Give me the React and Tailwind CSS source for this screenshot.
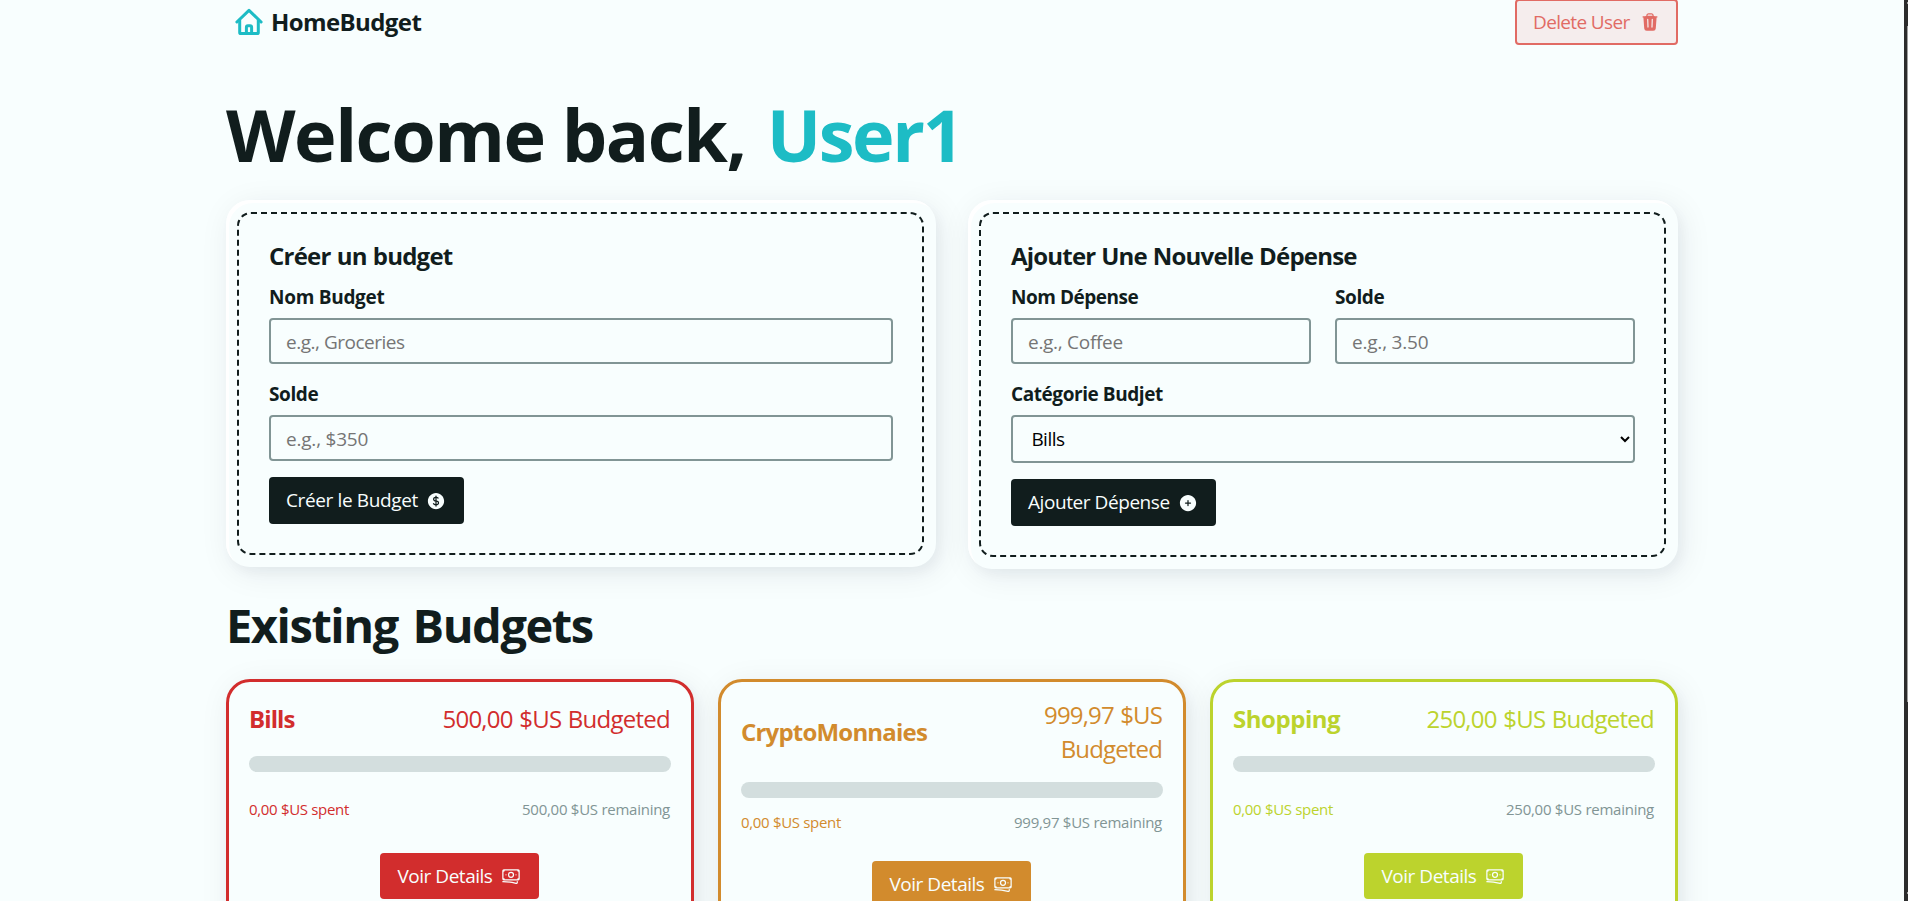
import React from "react";
import { HiTrash, HiCurrencyDollar, HiPlusCircle, HiOutlineBanknotes } from "react-icons/hi2";

const cardShadow =
  "shadow-[4px_6px_12px_rgba(17,24,50,0.035),4px_6px_32px_rgba(17,24,50,0.08)]";
const formCard =
  "w-[710px] rounded-[24px] bg-[#f8fefe] pt-3 pr-3 pb-3 pl-[11px] shadow-[inset_3px_3px_0_#ffffff,4px_6px_12px_rgba(17,24,50,0.035),4px_6px_32px_rgba(17,24,50,0.08)]";
const formBody =
  "rounded-[14px] border-2 border-dashed border-[#111d1d] pt-[29px] pr-[29px] pb-[29px] pl-[30px]";
const heading = "text-[24px] leading-[26px] font-bold";
const label = "block pt-px text-[19px] leading-[26px] font-bold";
const field =
  "mt-2 block h-[46px] w-full rounded-[4px] border-2 border-[#819595] bg-transparent px-[15px] pt-px text-[19px] placeholder:text-[#757575]";
const darkButton =
  "mt-4 flex h-[47px] items-center justify-between rounded-[4px] bg-[#111d1d] pr-[18px] pl-[17px] text-[19px] whitespace-nowrap text-[#f8fefe]";

function Logo() {
  return (
    <svg width="28" height="28" viewBox="0 0 28 28" fill="none" stroke="#1dbcc5" strokeWidth="3" strokeLinecap="round" strokeLinejoin="round">
      <path d="M1.9 14 14 2.4 26.1 14" />
      <path d="M4.7 12v12.4q0 1.2 1.2 1.2h16.2q1.2 0 1.2-1.2V12" />
      <path d="M11.4 25.4v-6q0-1.7 1.5-1.7h2.2q1.5 0 1.5 1.7v6" />
    </svg>
  );
}

const budgets = [
  {
    name: "Bills", nameTracking: "tracking-[-0.9px]",
    amount: "500,00 $US Budgeted", amountClass: "tracking-[-0.75px] [word-spacing:1px]",
    spent: "0,00 $US spent", remaining: "500,00 $US remaining",
    text: "text-[#d22d2d]", border: "border-[#d22d2d]", bg: "bg-[#d22d2d]",
    pad: "pt-5", bar: "mt-5", caption: "mt-[26px]", button: "mt-[33px]",
  },
  {
    name: "CryptoMonnaies", nameTracking: "tracking-[-0.8px]",
    amount: "999,97 $US Budgeted", amountClass: "w-[140px] tracking-[-0.85px] [word-spacing:1px]",
    spent: "0,00 $US spent", remaining: "999,97 $US remaining",
    text: "text-[#d28b2d]", border: "border-[#d28b2d]", bg: "bg-[#d28b2d]",
    pad: "pt-4", bar: "mt-4", caption: "mt-[13px]", button: "mt-[28px]",
  },
  {
    name: "Shopping", nameTracking: "tracking-[-0.47px]",
    amount: "250,00 $US Budgeted", amountClass: "tracking-[-0.75px] [word-spacing:1px]",
    spent: "0,00 $US spent", remaining: "250,00 $US remaining",
    text: "text-[#bcd32d]", border: "border-[#bcd32d]", bg: "bg-[#bcd32d]",
    pad: "pt-5", bar: "mt-5", caption: "mt-[26px]", button: "mt-[33px]",
  },
];

function BudgetCard({ b }) {
  return (
    <article className={`w-[468px] rounded-[24px] border-[3px] bg-[#f8fefe] px-5 pb-5 ${b.pad} ${b.border} ${b.text} ${cardShadow}`}>
      <div className="flex items-center justify-between pr-px text-[24px] leading-[34px]">
        <h3 className={`font-bold ${b.nameTracking}`}>{b.name}</h3>
        <p className={`text-right ${b.amountClass}`}>{b.amount}</p>
      </div>
      <div className={`h-4 rounded-full bg-[#d3dede] ${b.bar}`} />
      <div className={`flex justify-between pr-px text-[15px] leading-[22px] ${b.caption}`}>
        <span className="tracking-[-0.32px]">{b.spent}</span>
        <span className="tracking-[-0.26px] text-[#819595]">{b.remaining}</span>
      </div>
      <button className={`ml-[131px] flex h-[46px] w-[159px] items-center justify-between rounded-[4px] pr-[18px] pl-[17.5px] text-[19px] tracking-[-0.48px] whitespace-nowrap text-[#f8fefe] ${b.button} ${b.bg}`}>
        <span>Voir Details</span>
        <HiOutlineBanknotes className="size-5" />
      </button>
    </article>
  );
}

export default function App() {
  return (
    <div className="flex h-[901px] overflow-hidden bg-[#f8fefe] font-['Open_Sans','Noto_Sans',sans-serif] text-[#111d1d]">
      <main className="flex-1 pr-[226px] pl-[226px]">
        <nav className="flex h-[45px] items-end justify-between">
          <a className="flex h-[46px] items-center gap-2 pl-[9px] text-[24px] font-bold tracking-[-0.6px]">
            <Logo />
            <span>HomeBudget</span>
          </a>
          <button className="flex h-[46px] w-[163px] items-center justify-between rounded-[4px] border-2 border-[#e16b64] bg-[#f5eded] pr-4 pl-[16px] text-[19px] tracking-[-0.64px] whitespace-nowrap text-[#e16b64]">
            <span>Delete User</span>
            <HiTrash className="size-5" />
          </button>
        </nav>

        <h1 className="mt-[49px] text-[72px] leading-[80px] font-bold tracking-[-1.5px]">
          Welcome back, <span className="ml-[4px] tracking-[-2.36px] text-[#1dbcc5]">User1</span>
        </h1>

        <div className="mt-[26px] flex items-start gap-8">
          <section className={formCard}>
            <div className={formBody}>
              <h2 className={`${heading} tracking-[-0.75px] [word-spacing:0.5px]`}>Créer un budget</h2>
              <label className={`${label} mt-[14px] tracking-[-0.28px]`}>Nom Budget</label>
              <input className={`${field} tracking-[-0.49px]`} placeholder="e.g., Groceries" />
              <label className={`${label} mt-4 tracking-[-0.39px]`}>Solde</label>
              <input className={`${field} tracking-[-0.21px]`} placeholder="e.g., $350" />
              <button className={`${darkButton} w-[195px] tracking-[-0.37px]`}>
                <span>Créer le Budget</span>
                <HiCurrencyDollar className="size-5" />
              </button>
            </div>
          </section>

          <section className={formCard}>
            <div className={formBody}>
              <h2 className={`${heading} tracking-[-0.81px] [word-spacing:0.5px]`}>Ajouter Une Nouvelle Dépense</h2>
              <div className="mt-[14px] grid grid-cols-2 gap-6">
                <div>
                  <label className={`${label} tracking-[-0.48px]`}>Nom Dépense</label>
                  <input className={`${field} tracking-[-0.29px]`} placeholder="e.g., Coffee" />
                </div>
                <div>
                  <label className={`${label} tracking-[-0.39px]`}>Solde</label>
                  <input className={`${field} tracking-[-0.21px]`} placeholder="e.g., 3.50" />
                </div>
              </div>
              <label className={`${label} mt-4 tracking-[-0.43px]`}>Catégorie Budjet</label>
              <select className="mt-2 block h-12 w-full rounded-[4px] border-2 border-[#819595] bg-[#f8fefe] px-[14.4px] text-[19px] tracking-[-0.54px] text-black">
                <option>Bills</option>
                <option>CryptoMonnaies</option>
                <option>Shopping</option>
              </select>
              <button className={`${darkButton} w-[205px] tracking-[-0.43px]`}>
                <span>Ajouter Dépense</span>
                <HiPlusCircle className="size-5" />
              </button>
            </div>
          </section>
        </div>

        <h2 className="mt-[32px] text-[47px] leading-[48px] font-bold tracking-[-1.45px] [word-spacing:4px]">Existing Budgets</h2>

        <div className="mt-[30px] flex h-[260px] gap-6">
          {budgets.map((b) => (
            <BudgetCard key={b.name} b={b} />
          ))}
        </div>
      </main>

      <div className="flex w-1 flex-col items-end bg-[#2c2c2c]">
        <div className="mt-[2px] h-[2px] w-px bg-[#9f9f9f]" />
        <div className="mt-[22px] h-[676px] w-px bg-[#9f9f9f]" />
        <div className="mt-[190px] h-[2px] w-px bg-[#9f9f9f]" />
      </div>
    </div>
  );
}
